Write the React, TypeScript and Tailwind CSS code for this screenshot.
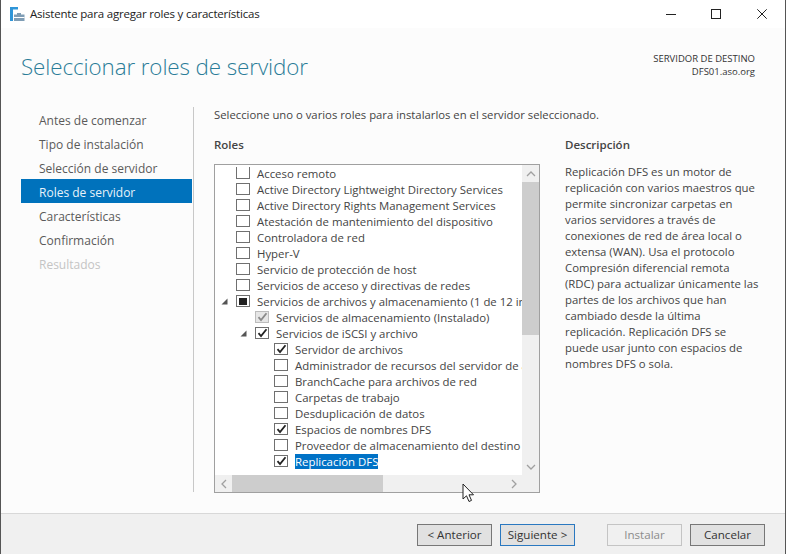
const rows: { t: string; l: number; s: string; arrow?: boolean; sel?: boolean; clip?: boolean }[] = [
  { t: "Acceso remoto", l: 0, s: "n", clip: true },
  { t: "Active Directory Lightweight Directory Services", l: 0, s: "n" },
  { t: "Active Directory Rights Management Services", l: 0, s: "n" },
  { t: "Atestación de mantenimiento del dispositivo", l: 0, s: "n" },
  { t: "Controladora de red", l: 0, s: "n" },
  { t: "Hyper-V", l: 0, s: "n" },
  { t: "Servicio de protección de host", l: 0, s: "n" },
  { t: "Servicios de acceso y directivas de redes", l: 0, s: "n" },
  { t: "Servicios de archivos y almacenamiento (1 de 12 instalados)", l: 0, s: "p", arrow: true },
  { t: "Servicios de almacenamiento (Instalado)", l: 1, s: "d" },
  { t: "Servicios de iSCSI y archivo", l: 1, s: "c", arrow: true },
  { t: "Servidor de archivos", l: 2, s: "c" },
  { t: "Administrador de recursos del servidor de archivos", l: 2, s: "n" },
  { t: "BranchCache para archivos de red", l: 2, s: "n" },
  { t: "Carpetas de trabajo", l: 2, s: "n" },
  { t: "Desduplicación de datos", l: 2, s: "n" },
  { t: "Espacios de nombres DFS", l: 2, s: "c" },
  { t: "Proveedor de almacenamiento del destino iSCSI", l: 2, s: "n" },
  { t: "Replicación DFS", l: 2, s: "c", sel: true },
];

const steps = ["Antes de comenzar", "Tipo de instalación", "Selección de servidor", "Roles de servidor", "Características", "Confirmación", "Resultados"];

const desc = [
  "Replicación DFS es un motor de",
  "replicación con varios maestros que",
  "permite sincronizar carpetas en",
  "varios servidores a través de",
  "conexiones de red de área local o",
  "extensa (WAN). Usa el protocolo",
  "Compresión diferencial remota",
  "(RDC) para actualizar únicamente las",
  "partes de los archivos que han",
  "cambiado desde la última",
  "replicación. Replicación DFS se",
  "puede usar junto con espacios de",
  "nombres DFS o sola.",
];

function Check({ s, clip }: { s: string; clip?: boolean }) {
  const dis = s === "d";
  return (
    <span
      className={`flex items-center justify-center w-[14px] h-[12px] shrink-0 border ${dis ? "bg-[#e6e6e6] border-[#bcbcbc]" : "bg-white border-[#707070]"} ${clip ? "border-t-0" : ""}`}
    >
      {s === "p" && <span className="w-[8px] h-[7px] bg-[#222]" />}
      {(s === "c" || s === "d") && (
        <svg width="11" height="10" viewBox="0 0 11 10" fill="none">
          <path d="M1.5 5.2 L4 8 L9.5 1.2" stroke={dis ? "#8a8a8a" : "#222"} strokeWidth="1.8" />
        </svg>
      )}
    </span>
  );
}

function Arrow() {
  return (
    <svg width="7" height="7" viewBox="0 0 7 7" className="absolute left-[-15px] top-[5px]">
      <path d="M6.5 0.5 V6.5 H0.5 Z" fill="#555" />
    </svg>
  );
}

function Chevron({ d }: { d: string }) {
  return (
    <svg width="10" height="10" viewBox="0 0 10 10" fill="none">
      <path d={d} stroke="#a0a0a0" strokeWidth="1.3" />
    </svg>
  );
}

function Btn({ children, kind }: { children: string; kind?: string }) {
  const cls =
    kind === "focus"
      ? "bg-[#e1e1e1] border-[#2a78c0] text-[#333]"
      : kind === "disabled"
        ? "bg-[#f0f0f0] border-[#c4c4c4] text-[#8c8c8c]"
        : "bg-[#e1e1e1] border-[#777] text-[#333]";
  return (
    <button className={`w-[75px] h-[22px] border text-[11.6px] leading-none flex items-center justify-center ${cls}`}>
      {children}
    </button>
  );
}

export default function App() {
  return (
    <div
      className="relative w-[786px] h-[554px] overflow-hidden flex flex-col bg-white border-l border-r border-[#555] text-[#444]"
      style={{ fontFamily: '"Open Sans", "Noto Sans", sans-serif' }}
    >
      <div className="h-[28px] shrink-0 bg-white flex items-center pl-[9px] pr-[18px]">
        <svg width="15" height="15" viewBox="0 0 15 15" className="shrink-0">
          <path d="M0 0H8V2.5H3V14H0Z" fill="#2f95d8" />
          <path d="M4 7.5H7V6H11V7.5H14.5V14H4Z" fill="#7f9db5" />
          <path d="M4 10.5H14.5" stroke="#fff" strokeWidth="1" />
        </svg>
        <span className="ml-[5px] text-[11.5px] text-[#222] tracking-[-0.2px]">Asistente para agregar roles y características</span>
        <div className="ml-auto flex items-center">
          <span className="w-[10px] h-px bg-[#222]" />
          <span className="ml-[35px] w-[10px] h-[10px] border border-[#222]" />
          <svg width="10" height="10" viewBox="0 0 10 10" fill="none" className="ml-[36px]">
            <path d="M0.3 0.3 L9.7 9.7 M9.7 0.3 L0.3 9.7" stroke="#222" strokeWidth="1" />
          </svg>
        </div>
      </div>

      <div className="flex-1 min-h-0 bg-[#fcfcfc] flex flex-col">
        <div className="h-[79px] shrink-0 flex justify-between pl-[20px] pr-[30px]">
          <h1 className="pt-[23px] text-[22.4px] leading-[32px] font-light text-[#2b7c98] tracking-[-0.1px]">Seleccionar roles de servidor</h1>
          <div className="pt-[24px] text-right text-[9.5px] leading-[13px] text-[#333]">
            <div>SERVIDOR DE DESTINO</div>
            <div>DFS01.aso.org</div>
          </div>
        </div>

        <div className="flex-1 min-h-0 flex">
          <nav className="w-[171px] ml-[20px] mr-[1px] shrink-0">
            {steps.map((s) => (
              <div
                key={s}
                className={`h-[24px] pl-[18px] pt-[3px] flex items-center text-[12px] ${
                  s === "Roles de servidor"
                    ? "bg-[#0072bc] text-[#e8f2fa]"
                    : s === "Resultados"
                      ? "text-[#c4c4c4]"
                      : "text-[#5a5a5a]"
                }`}
              >
                {s}
              </div>
            ))}
          </nav>
          <div className="w-px h-[385px] bg-[#c8c8c8] shrink-0" />

          <div className="ml-[20px] flex-1 min-w-0">
            <p className="h-[16px] text-[11.3px] leading-[16px] whitespace-nowrap">
              Seleccione uno o varios roles para instalarlos en el servidor seleccionado.
            </p>
            <div className="mt-[14px] flex gap-[25px]">
              <div className="w-[326px] shrink-0">
                <div className="h-[27px] text-[11.5px] font-semibold text-[#444] leading-[16px]">Roles</div>
                <div className="h-[329px] border border-[#a0a0a0] bg-white flex flex-col">
                  <div className="flex-1 min-h-0 flex">
                    <div className="flex-1 min-w-0 overflow-hidden pl-[21px]">
                      {rows.map((r) => (
                        <div
                          key={r.t}
                          className={`relative h-[16px] flex items-center gap-[7px] whitespace-nowrap ${
                            r.l === 1 ? "ml-[19px]" : r.l === 2 ? "ml-[38px]" : ""
                          }`}
                        >
                          {r.arrow && <Arrow />}
                          <Check s={r.s} clip={r.clip} />
                          <span
                            className={`text-[11.4px] leading-[15px] ${r.sel ? "bg-[#0072c6] text-white" : ""}`}
                          >
                            {r.t}
                          </span>
                        </div>
                      ))}
                    </div>
                    <div className="w-[17px] shrink-0 bg-[#f0f0f0] flex flex-col">
                      <div className="h-[17px] flex items-center justify-center">
                        <Chevron d="M1 7 L5 3 L9 7" />
                      </div>
                      <div className="h-[153px] bg-[#cdcdcd]" />
                      <div className="flex-1" />
                      <div className="h-[17px] flex items-center justify-center">
                        <Chevron d="M1 3 L5 7 L9 3" />
                      </div>
                    </div>
                  </div>
                  <div className="h-[17px] shrink-0 bg-[#f0f0f0] flex items-center">
                    <div className="w-[17px] flex items-center justify-center">
                      <Chevron d="M7 1 L3 5 L7 9" />
                    </div>
                    <div className="w-[151px] h-full bg-[#cdcdcd]" />
                    <div className="ml-auto w-[17px] mr-[17px] flex items-center justify-center">
                      <Chevron d="M3 1 L7 5 L3 9" />
                    </div>
                  </div>
                </div>
              </div>
              <div className="w-[196px] shrink-0">
                <div className="h-[27px] text-[11.5px] font-semibold leading-[16px]">Descripción</div>
                <div className="text-[11.35px] leading-[16px] whitespace-nowrap">
                  {desc.map((d) => (
                    <div key={d}>{d}</div>
                  ))}
                </div>
              </div>
            </div>
          </div>
        </div>
      </div>

      <div className="h-[41px] shrink-0 bg-[#f0f0f0] border-t border-[#d8d8d8] flex items-center pl-[416px] pt-[2px]">
        <Btn>{"< Anterior"}</Btn>
        <span className="ml-[8px]">
          <Btn kind="focus">{"Siguiente >"}</Btn>
        </span>
        <span className="ml-[32px]">
          <Btn kind="disabled">Instalar</Btn>
        </span>
        <span className="ml-[8px]">
          <Btn>Cancelar</Btn>
        </span>
      </div>

      <svg width="13" height="20" viewBox="0 0 13 20" className="absolute left-[461px] top-[483px]">
        <path d="M1 1 V16 L4.5 12.8 L7 18.5 L9.5 17.4 L7 11.8 H11.5 Z" fill="#fff" stroke="#222" strokeWidth="1" />
      </svg>
    </div>
  );
}
